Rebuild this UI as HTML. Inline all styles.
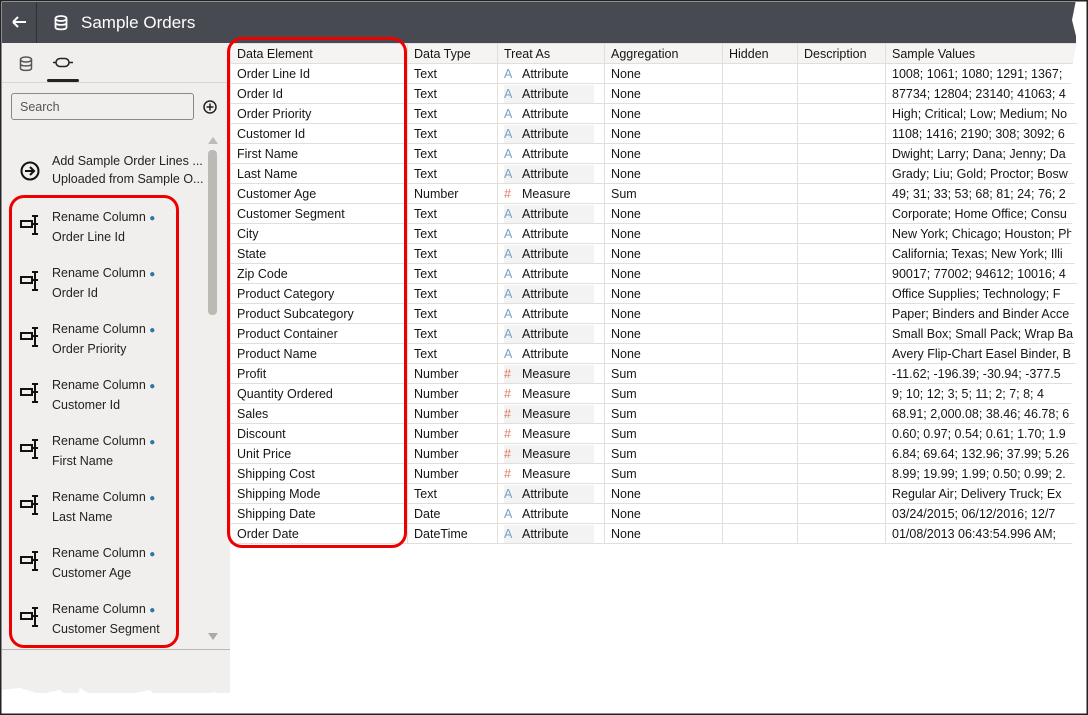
<!DOCTYPE html>
<html><head><style>
*{margin:0;padding:0;box-sizing:border-box}
body{width:1088px;height:715px;overflow:hidden;background:#fff;font-family:"Liberation Sans",sans-serif;position:relative}
.hdr{position:absolute;left:2px;top:2px;width:1074px;height:41px;background:#474a51}
.hdr .div{position:absolute;left:34px;top:0;width:1px;height:41px;background:#2f3136}
.hdr .t{position:absolute;left:79px;top:11px;color:#fff;font-size:17px}
.left{position:absolute;left:2px;top:43px;width:228px;height:650px;background:#f1efed}
.abs{position:absolute}
.lt{font-size:12.5px;color:#222;line-height:18px}
table{position:absolute;left:230px;top:43px;border-collapse:collapse;font-size:12.5px;color:#161513;table-layout:fixed}
td,th{height:20px;line-height:18px;border:1px solid #e1dfdc;padding:0 6px;white-space:nowrap;overflow:hidden;font-weight:normal;text-align:left}
th{background:#f5f4f2}
.ic{display:inline-block;width:18px;color:#7aa2c4}
.ms{color:#e07a5f}
.sh{background:#f3f3f3;display:inline-block;width:90px}
</style></head><body>
<div class="hdr"><div class="div"></div>
<svg class="abs" style="left:9px;top:13px" width="16" height="14"><path d="M2 7H15M2 7L7 2M2 7L7 12" stroke="#fff" stroke-width="2" fill="none"/></svg>
<svg class="abs" style="left:52px;top:13px" width="14" height="16"><ellipse cx="7" cy="3.5" rx="5.5" ry="2.5" fill="none" stroke="#fff" stroke-width="1.8"/><path d="M1.5 3.5V12.5C1.5 15 12.5 15 12.5 12.5V3.5M1.5 8C1.5 10.5 12.5 10.5 12.5 8" fill="none" stroke="#fff" stroke-width="1.8"/></svg>
<div class="t">Sample Orders</div></div>
<div class="left">
<svg class="abs" style="left:17px;top:13px" width="14" height="16"><ellipse cx="7" cy="3.5" rx="5.5" ry="2.5" fill="none" stroke="#555" stroke-width="1.5"/><path d="M1.5 3.5V12.5C1.5 15 12.5 15 12.5 12.5V3.5M1.5 8C1.5 10.5 12.5 10.5 12.5 8" fill="none" stroke="#555" stroke-width="1.5"/></svg>
<svg class="abs" style="left:51px;top:14px" width="20" height="12"><rect x="3" y="1.5" width="13" height="8" rx="4" fill="none" stroke="#222" stroke-width="1.5"/><path d="M0 5.5H3M16 5.5H20" stroke="#222" stroke-width="1.5"/></svg>
<div class="abs" style="left:45px;top:36px;width:32px;height:3px;background:#222;border-radius:2px"></div>
<div class="abs" style="left:0;top:39px;width:228px;height:1px;background:#d8d6d3"></div>
<div class="abs" style="left:9px;top:50px;width:183px;height:27px;border:1px solid #8a8784;border-radius:3px;background:#f1efed"><span class="lt" style="position:absolute;left:8px;top:4px;color:#555">Search</span></div>
<svg class="abs" style="left:201px;top:57px" width="14" height="14"><circle cx="7" cy="7" r="6" fill="none" stroke="#222" stroke-width="1.5"/><path d="M7 3.5V10.5M3.5 7H10.5" stroke="#222" stroke-width="1.5"/></svg>
<div class="abs" style="left:206px;top:107px;width:9px;height:165px;background:#bdb9b5;border-radius:4px"></div>
<div class="abs" style="left:206px;top:94px;width:0;height:0;border-left:5px solid transparent;border-right:5px solid transparent;border-bottom:7px solid #bbb"></div>
<div class="abs" style="left:206px;top:590px;width:0;height:0;border-left:5px solid transparent;border-right:5px solid transparent;border-top:7px solid #aaa"></div>
<svg class="abs" style="left:18px;top:118px" width="20" height="20"><circle cx="10" cy="10" r="8.5" fill="none" stroke="#111" stroke-width="2"/><path d="M5 10H14M10 6L14 10L10 14" fill="none" stroke="#111" stroke-width="2"/></svg>
<div class="abs lt" style="left:50px;top:109px">Add Sample Order Lines ...<br>Uploaded from Sample O...</div>
<div class="abs" style="left:0;top:606px;width:228px;height:1px;background:#bcb9b5"></div>
</div>
<div id="items"></div>
<div class="abs" style="left:9px;top:195px;width:170px;height:453px;border:3px solid #e00;border-radius:15px"></div>
<table>
<colgroup><col style="width:177px"><col style="width:90px"><col style="width:107px"><col style="width:118px"><col style="width:75px"><col style="width:88px"><col style="width:200px"></colgroup>
<tr><th>Data Element</th><th>Data Type</th><th>Treat As</th><th>Aggregation</th><th>Hidden</th><th>Description</th><th>Sample Values</th></tr>
</table>
<div class="abs" style="left:227px;top:37px;width:180px;height:511px;border:3px solid #e00;border-radius:15px"></div>
<svg class="abs" style="left:0;top:0" width="1088" height="715">
<path d="M1076 0 L1088 0 L1088 715 L0 715 L0 690 L20 688 L40 694 L60 690 L75 702 L80 688 L100 700 L130 694 L150 690 L160 700 L190 696 L215 692 L230 700 L250 705 L255 688 L290 690 L300 698 L335 693 L345 686 L370 688 L395 697 L420 693 L440 690 L465 687 L480 699 L510 700 L520 688 L560 689 L580 697 L600 693 L620 688 L650 692 L680 690 L720 692 L760 690 L800 694 L840 690 L880 692 L920 688 L960 694 L1000 690 L1040 692 L1068 688 L1072 650 L1078 600 L1070 560 L1076 520 L1072 480 L1078 440 L1070 400 L1076 360 L1072 320 L1078 280 L1070 240 L1076 200 L1072 160 L1078 120 L1070 80 L1077 40 L1072 20Z" fill="#fff"/>
<rect x="0.5" y="0.5" width="1087" height="714" fill="none" stroke="#222" stroke-width="2"/>
</svg>
<script>
var rows=[["Order Line Id","Text","A","None","1008; 1061; 1080; 1291; 1367;"],["Order Id","Text","A","None","87734; 12804; 23140; 41063; 4"],["Order Priority","Text","A","None","High; Critical; Low; Medium; No"],["Customer Id","Text","A","None","1108; 1416; 2190; 308; 3092; 6"],["First Name","Text","A","None","Dwight; Larry; Dana; Jenny; Da"],["Last Name","Text","A","None","Grady; Liu; Gold; Proctor; Bosw"],["Customer Age","Number","#","Sum","49; 31; 33; 53; 68; 81; 24; 76; 2"],["Customer Segment","Text","A","None","Corporate; Home Office; Consu"],["City","Text","A","None","New York; Chicago; Houston; Ph"],["State","Text","A","None","California; Texas; New York; Illi"],["Zip Code","Text","A","None","90017; 77002; 94612; 10016; 4"],["Product Category","Text","A","None","Office Supplies; Technology; F"],["Product Subcategory","Text","A","None","Paper; Binders and Binder Acce"],["Product Container","Text","A","None","Small Box; Small Pack; Wrap Ba"],["Product Name","Text","A","None","Avery Flip-Chart Easel Binder, B"],["Profit","Number","#","Sum","-11.62; -196.39; -30.94; -377.5"],["Quantity Ordered","Number","#","Sum","9; 10; 12; 3; 5; 11; 2; 7; 8; 4"],["Sales","Number","#","Sum","68.91; 2,000.08; 38.46; 46.78; 6"],["Discount","Number","#","Sum","0.60; 0.97; 0.54; 0.61; 1.70; 1.9"],["Unit Price","Number","#","Sum","6.84; 69.64; 132.96; 37.99; 5.26"],["Shipping Cost","Number","#","Sum","8.99; 19.99; 1.99; 0.50; 0.99; 2."],["Shipping Mode","Text","A","None","Regular Air; Delivery Truck; Ex"],["Shipping Date","Date","A","None","03/24/2015; 06/12/2016; 12/7"],["Order Date","DateTime","A","None","01/08/2013 06:43:54.996 AM;"]];
var t=document.querySelector('table'),h='';
rows.forEach(function(r,i){var m=r[2]=='#';var ta='<span class="'+(i%2?'sh':'')+'"><span class="ic'+(m?' ms':'')+'">'+r[2]+'</span>'+(m?'Measure':'Attribute')+'</span>';
h+='<tr><td>'+r[0]+'</td><td>'+r[1]+'</td><td>'+ta+'</td><td>'+r[3]+'</td><td></td><td></td><td>'+r[4]+'</td></tr>';});
t.insertAdjacentHTML('beforeend',h);
var n=["Order Line Id","Order Id","Order Priority","Customer Id","First Name","Last Name","Customer Age","Customer Segment"],s='';
n.forEach(function(x,i){var y=208+i*56;
s+='<svg class="abs" style="left:20px;top:'+(y+7)+'px" width="22" height="20"><rect x="1" y="6" width="11" height="6" fill="none" stroke="#111" stroke-width="2"/><path d="M15 1V19M12 1H18M12 19H18M12 9H18" stroke="#111" stroke-width="2" fill="none"/></svg>';
s+='<div class="abs lt" style="left:52px;top:'+y+'px">Rename Column <span style="color:#2a7aa5;font-size:10px">&#9679;</span><br>'+x+'</div>';});
document.getElementById('items').innerHTML=s;
</script>
</body></html>
